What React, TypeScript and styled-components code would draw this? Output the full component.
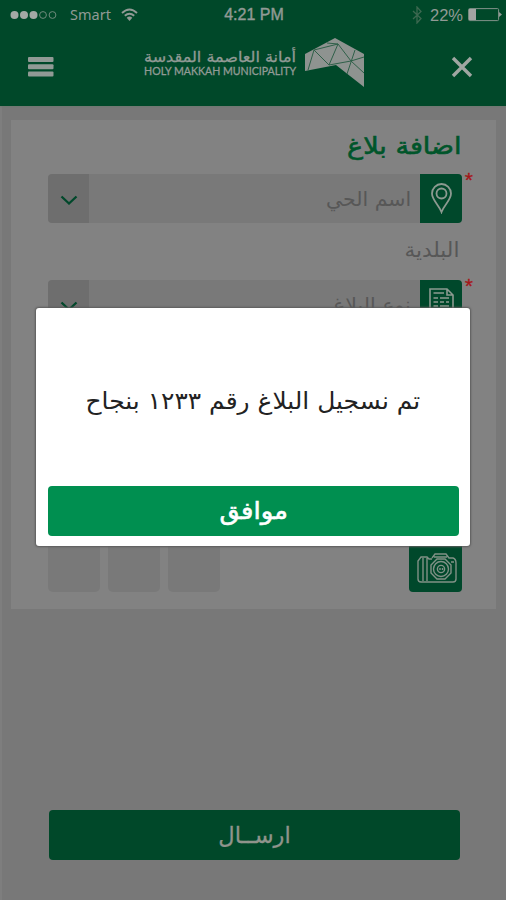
import React from "react";
import styled, { createGlobalStyle } from "styled-components";

const GlobalStyle = createGlobalStyle`
  * { box-sizing: border-box; }
  body { margin: 0; background: #787878; font-family: "DejaVu Sans", sans-serif; }
`;

const Screen = styled.div`
  position: relative;
  width: 506px;
  height: 900px;
  overflow: hidden;
  display: flex;
  flex-direction: column;
  background: linear-gradient(90deg, #7e7e7e 0 2px, #787878 2px);
`;

const Header = styled.header`
  height: 106px;
  flex: none;
  background: #004829;
  color: #919a95;
  box-shadow: 0 1px 2px #6d7870;
`;

const StatusBar = styled.div`
  display: grid;
  grid-template-columns: 1fr auto 1fr;
  align-items: center;
  height: 30px;
  padding: 0 4px 0 10px;
  font: 16px/30px "Liberation Sans", sans-serif;
`;

const StatusGroup = styled.div<{ $end?: boolean }>`
  display: flex;
  align-items: center;
  justify-content: ${(p) => (p.$end ? "flex-end" : "flex-start")};
`;

const Carrier = styled.span`
  margin: 0 10px 2px 13px;
  font: 14.5px/28px "Noto Sans", sans-serif;
`;

const Clock = styled.span`
  font-size: 16px;
  -webkit-text-stroke: 0.4px;
  margin-right: 4px;
`;

const Percent = styled.span`
  margin: 0 5px 0 8px;
  font-size: 16.5px;
`;

const NavBar = styled.div`
  display: flex;
  align-items: center;
  height: 73px;
  padding: 0 32px 0 28px;
`;

const Brand = styled.div`
  display: flex;
  align-items: flex-start;
  margin-left: 90px;
  gap: 9px;
  height: 58px;
`;

const BrandText = styled.div`
  display: flex;
  flex-direction: column;
  align-items: flex-end;
  width: 152px;
  padding-top: 12px;
`;

const BrandArabic = styled.div`
  white-space: nowrap;
  font-size: 15px;
  line-height: 15px;
  -webkit-text-stroke: 0.3px;
  transform: scaleX(1.07);
  transform-origin: right;
`;

const BrandLatin = styled.div`
  white-space: nowrap;
  margin-top: 1px;
  font: 10.6px/11px Lato, sans-serif;
  -webkit-text-stroke: 0.3px;
`;

const CloseIcon = styled.svg`
  margin-left: auto;
`;

const Card = styled.main`
  width: 485px;
  height: 489px;
  flex: none;
  margin: 14px 0 0 11px;
  padding: 0 34px 0 37px;
  background: #828282;
  display: flex;
  flex-direction: column;
  direction: rtl;
`;

const Title = styled.h1`
  margin: 0;
  height: 54px;
  font-size: 23.5px;
  line-height: 52px;
  font-weight: normal;
  -webkit-text-stroke: 0.6px;
  color: #00552a;
`;

const Stretch = styled.span<{ $sx?: number; $origin?: string }>`
  display: inline-block;
  white-space: nowrap;
  transform: scaleX(${(p) => p.$sx ?? 1});
  transform-origin: ${(p) => p.$origin ?? "right"};
`;

const Field = styled.div`
  position: relative;
  display: flex;
  height: 49px;
  flex: none;
`;

const FieldIcon = styled.div`
  width: 42px;
  display: grid;
  place-items: center;
  background: #00482b;
  border-radius: 0 4px 4px 0;
`;

const FieldText = styled.div`
  flex: 1;
  padding-right: 9px;
  background: #797979;
  color: #575757;
  font-size: 20px;
  line-height: 50px;
`;

const DropButton = styled.div`
  width: 41px;
  display: grid;
  place-items: center;
  padding-top: 4px;
  background: #6e6e6e;
  border-radius: 4px 0 0 4px;
`;

const Required = styled.span`
  position: absolute;
  right: -11px;
  top: -4px;
  font: 21px/20px "Liberation Sans", sans-serif;
  -webkit-text-stroke: 0.3px;
  color: #a51618;
`;

const Label = styled.div`
  height: 57px;
  flex: none;
  padding-right: 3px;
  color: #575757;
  font-size: 20.5px;
  line-height: 55px;
`;

const Photos = styled.div`
  display: flex;
  gap: 8px;
  height: 52px;
  margin-top: auto;
  margin-bottom: 17px;
`;

const CameraTile = styled.div`
  width: 53px;
  display: grid;
  place-items: center;
  padding: 4px 0 0 2px;
  margin-left: auto;
  border-radius: 4px;
  background: #00482b;
`;

const Thumb = styled.div`
  width: 52px;
  border-radius: 5px;
  background: #797979;
`;

const Submit = styled.button`
  width: 411px;
  height: 50px;
  flex: none;
  margin: auto 0 40px 49px;
  padding: 0;
  border: 0;
  border-radius: 4px;
  background: #004829;
  color: #90948c;
  font: 22.5px/48px "DejaVu Sans", sans-serif;
  -webkit-text-stroke: 0.3px;
`;

const Dialog = styled.section`
  position: absolute;
  left: 36px;
  top: 308px;
  width: 434px;
  height: 238px;
  padding: 0 11px 10px 12px;
  display: flex;
  flex-direction: column;
  background: #fff;
  border-radius: 3px;
  box-shadow: 0 0 2px 1px #5c5c5c;
  direction: rtl;
`;

const Message = styled.p`
  height: 178px;
  flex: none;
  margin: 0;
  padding: 7px 2px 0 0;
  text-align: center;
  font-size: 23.5px;
  line-height: 173px;
  color: #222;
`;

const MessageText = styled(Stretch)`
  margin: 0 0 0 4px;
`;

const Confirm = styled.button`
  height: 50px;
  flex: none;
  padding: 0;
  border: 0;
  border-radius: 4px;
  background: #008f50;
  color: #fff;
  font: 24px/46px "DejaVu Sans", sans-serif;
  -webkit-text-stroke: 0.6px;
`;

const Signal = () => (
  <svg width="47" height="12" viewBox="0 0 47 12" fill="#a3a9a5">
    {[4.5, 14, 23.5].map((x) => <circle key={x} cx={x} cy="6" r="4" />)}
    {[33, 42.5].map((x) => (
      <circle key={x} cx={x} cy="6" r="3.4" fill="none" stroke="#6f8b7c" />
    ))}
  </svg>
);

const Wifi = () => (
  <svg width="17" height="14" viewBox="0 0 17 14" fill="none" stroke="#919a95" strokeWidth="1.9">
    <path d="M1 5Q8.5-2 16 5M3.8 7.8Q8.5 3.6 13.2 7.8" />
    <path d="M5.7 9.7Q8.5 7.4 11.3 9.7L8.5 13Z" fill="#919a95" stroke="none" />
  </svg>
);

const Bluetooth = () => (
  <svg width="10" height="18" viewBox="0 0 10 18" fill="none" stroke="#3c6850" strokeWidth="1.3">
    <path d="M1 5L9 12.5L5 17V1L9 5.5L1 13" />
  </svg>
);

const Battery = () => (
  <svg width="34" height="16" viewBox="0 0 34 16">
    <rect x=".6" y="1.6" width="30" height="12" rx="1" fill="none" stroke="#819188" />
    <rect x="1" y="2" width="7" height="11" fill="#a3a5a3" />
    <path d="M31 5L34 7.5L31 10Z" fill="#919a95" />
  </svg>
);

const Logo = () => (
  <svg width="60" height="50" viewBox="0 0 60 50">
    <path d="M0 16L30 0L59 16V49L31 27L0 33Z" fill="#8e9390" />
    <path
      d="M9 12L3 32M9 12L24 27L33 6L46 23L59 35M9 12L33 6L22 5M24 27L46 23L59 19M50 12L42 36"
      fill="none"
      stroke="#2f6049"
      strokeWidth="1"
    />
  </svg>
);

const Pin = () => (
  <svg width="21" height="31" viewBox="0 0 21 31" fill="none" stroke="#8c9a91" strokeWidth="1.8">
    <path d="M10.5 29C8 22 1 17 1 10.5A9.5 9.5 0 0 1 20 10.5C20 17 13 22 10.5 29Z" />
    <circle cx="10.5" cy="10.5" r="5" />
  </svg>
);

const Report = () => (
  <svg width="25" height="34" viewBox="0 0 25 34" fill="none" stroke="#8c9a91" strokeWidth="1.6">
    <path d="M1 1H18L24 7V33H1ZM18 1V7H24M4.500 5H15M4.500 10H9M11 10H20M4.500 14H9M11 14H15M17 14H20M4.500 18H9M11 18H20M4.500 22H20" />
  </svg>
);

const Camera = () => (
  <svg width="40" height="32" viewBox="0 0 40 32" fill="none" stroke="#819187" strokeWidth="1.4">
    <path d="M15 6L18 2H29L32 6H36Q39 7 39 11V27Q39 30 36 30H4Q1 30 1 27V9L4 5H10L12 7H15M6 6V29M10 6V29M17 5H30" />
    <path d="M20 7H28L34 13V21L28 27H20L14 21V13Z" />
    <circle cx="24" cy="17" r="7.5" />
    <circle cx="24" cy="17" r="3.6" />
    <path d="M23 16V18M25.500 16V18M34 10H37" />
  </svg>
);

const Chevron = () => (
  <svg width="18" height="11" viewBox="0 0 18 11" fill="none" stroke="#00482b" strokeWidth="2.3">
    <path d="M1.500 1.500L9 8.500L16.500 1.500" />
  </svg>
);

const SelectField = ({ icon, text, sx }: { icon: React.ReactNode; text: string; sx: number }) => (
  <Field>
    <FieldIcon>{icon}</FieldIcon>
    <FieldText><Stretch $sx={sx}>{text}</Stretch></FieldText>
    <DropButton><Chevron /></DropButton>
    <Required>*</Required>
  </Field>
);

export default function App() {
  return (
    <Screen>
      <GlobalStyle />
      <Header>
        <StatusBar>
          <StatusGroup><Signal /><Carrier>Smart</Carrier><Wifi /></StatusGroup>
          <Clock>4:21 PM</Clock>
          <StatusGroup $end><Bluetooth /><Percent>22%</Percent><Battery /></StatusGroup>
        </StatusBar>
        <NavBar>
          <svg width="26" height="20" viewBox="0 0 26 20" fill="#919a95">
            {[0, 7.2, 14.4].map((y) => <rect key={y} y={y} width="25.500" height="5" rx="1" />)}
          </svg>
          <Brand>
            <BrandText>
              <BrandArabic dir="rtl">أمانة العاصمة المقدسة</BrandArabic>
              <BrandLatin>HOLY MAKKAH MUNICIPALITY</BrandLatin>
            </BrandText>
            <Logo />
          </Brand>
          <CloseIcon width="24" height="22" viewBox="0 0 24 22" stroke="#a0a6a2" strokeWidth="3.4">
            <path d="M3 2L21 20M21 2L3 20" />
          </CloseIcon>
        </NavBar>
      </Header>
      <Card>
        <Title><Stretch $sx={1.15}>اضافة بلاغ</Stretch></Title>
        <SelectField icon={<Pin />} text="اسم الحي" sx={1.025} />
        <Label><Stretch $sx={1.05}>البلدية</Stretch></Label>
        <SelectField icon={<Report />} text="نوع البلاغ" sx={1.025} />
        <Photos>
          <CameraTile><Camera /></CameraTile>
          <Thumb /><Thumb /><Thumb />
        </Photos>
      </Card>
      <Submit><Stretch $origin="center">ارســال</Stretch></Submit>
      <Dialog role="dialog">
        <Message><Stretch $origin="center" $sx={1.06}>تم نسجيل البلاغ رقم ١٢٣٣ بنجاح</Stretch></Message>
        <Confirm><Stretch $origin="center" $sx={1.08}>موافق</Stretch></Confirm>
      </Dialog>
    </Screen>
  );
}
